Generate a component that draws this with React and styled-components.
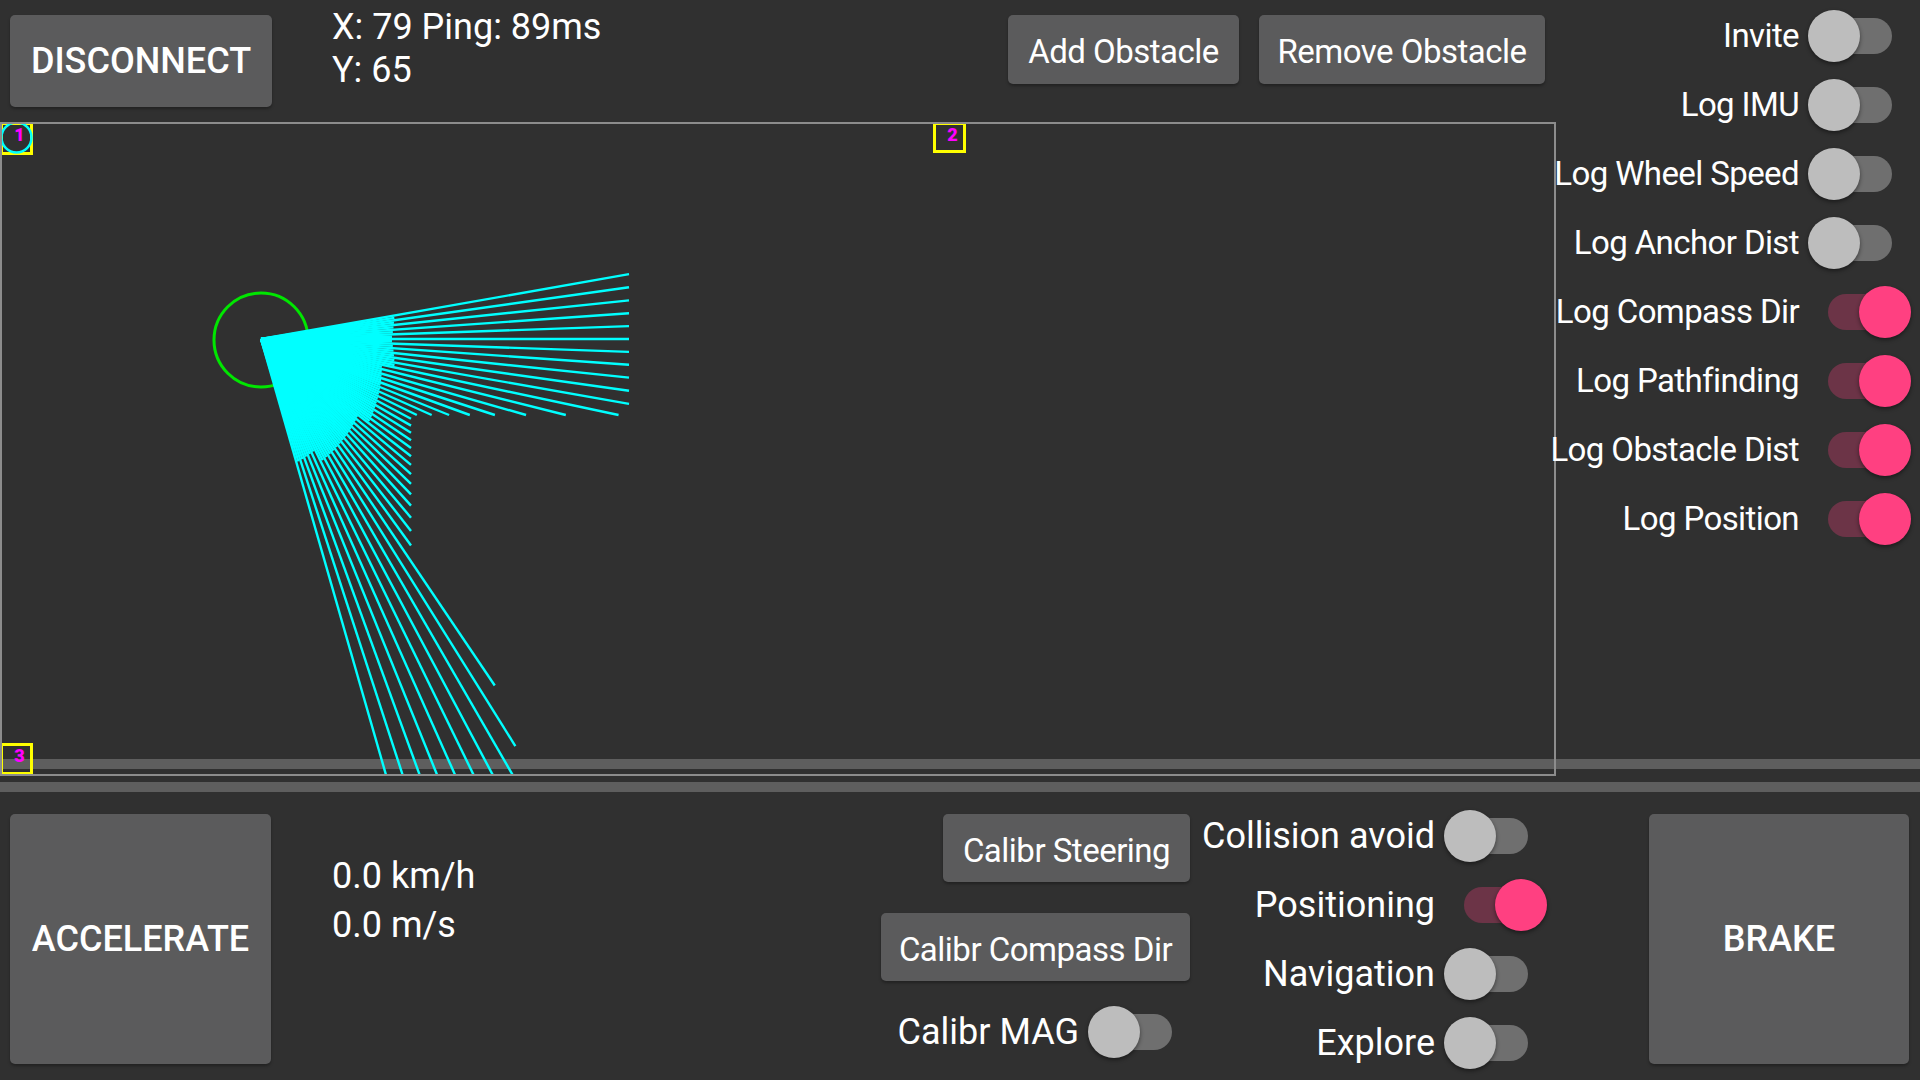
import styled, { createGlobalStyle } from "styled-components";

const GlobalStyle = createGlobalStyle`
  html, body {
    margin: 0;
    background: #303030;
  }
  body {
    font-family: Roboto, "Liberation Sans", sans-serif;
    color: #ffffff;
  }
`;

const Screen = styled.div`
  width: 1920px;
  height: 1080px;
  display: flex;
  flex-direction: column;
  background: #303030;
  overflow: hidden;
`;

const TopSection = styled.div`
  position: relative;
  display: grid;
  grid-template-columns: 1556px minmax(0, 1fr);
`;

const LeftColumn = styled.div`
  display: flex;
  flex-direction: column;
`;

const Header = styled.div`
  height: 122px;
  box-sizing: border-box;
  display: flex;
  align-items: flex-start;
  padding: 15px 11px 0 10px;
`;

const Button = styled.button`
  flex-shrink: 0;
  width: ${({ $w }) => $w}px;
  height: ${({ $h }) => $h}px;
  margin-left: ${({ $ml }) => ($ml === "auto" ? "auto" : `${$ml || 0}px`)};
  padding: ${({ $caps }) => ($caps ? "0" : "4px 0 0")};
  border: none;
  border-radius: 5px;
  background: #5b5b5c;
  box-shadow: 0 2px 3px rgba(0, 0, 0, 0.3);
  color: #ffffff;
  font-family: Roboto, "Liberation Sans", sans-serif;
  font-size: ${({ $caps }) => ($caps ? "36px" : "33px")};
  font-weight: ${({ $caps }) => ($caps ? 500 : 400)};
  letter-spacing: ${({ $caps }) => ($caps ? "0" : "-0.5px")};
  text-transform: ${({ $caps }) => ($caps ? "uppercase" : "none")};
  white-space: nowrap;
`;

const Readout = styled.div`
  margin-left: ${({ $ml }) => $ml}px;
  margin-top: ${({ $mt }) => $mt}px;
  font-size: 36px;
  line-height: ${({ $lh }) => $lh}px;
  white-space: nowrap;
`;

const Canvas = styled.svg`
  position: relative;
  z-index: 1;
  display: block;
  width: 1556px;
  height: 654px;
  box-sizing: border-box;
  border: 2px solid #8c8c8c;
`;

const Band = styled.div`
  height: 10px;
  background: #5e5e5e;
`;

const OverBand = styled(Band)`
  position: absolute;
  left: 0;
  right: 0;
  bottom: 7px;
  z-index: 0;
`;

const LowerBand = styled(Band)`
  margin-top: 6px;
`;

const RightPanel = styled.div`
  position: relative;
  z-index: 2;
  min-width: 0;
  display: flex;
  flex-direction: column;
  padding: 1px 9px 0 0;
`;

const ToggleRow = styled.div`
  height: 69px;
  display: flex;
  align-items: center;
  justify-content: flex-end;
  gap: 9px;
`;

const Label = styled.span`
  flex-shrink: 0;
  font-size: ${({ $big }) => ($big ? "36px" : "33px")};
  letter-spacing: ${({ $big }) => ($big ? "0" : "-0.6px")};
  white-space: nowrap;
`;

const SwitchBox = styled.span`
  position: relative;
  flex-shrink: 0;
  width: 103px;
  height: 52px;
`;

const Track = styled.span`
  position: absolute;
  left: 20px;
  top: 8px;
  width: 64px;
  height: 36px;
  border-radius: 18px;
  background: ${({ $on }) => ($on ? "#6c3447" : "#6f6f6f")};
`;

const Thumb = styled.span`
  position: absolute;
  top: 0;
  left: ${({ $on }) => ($on ? "51px" : "0")};
  width: 52px;
  height: 52px;
  border-radius: 50%;
  background: ${({ $on }) => ($on ? "#ff4081" : "#bdbdbd")};
  box-shadow: 0 2px 4px rgba(0, 0, 0, 0.45);
`;

const BottomRow = styled.div`
  display: flex;
  align-items: flex-start;
  padding: 22px 11px 0 10px;
`;

const CalibColumn = styled.div`
  margin-left: auto;
  display: flex;
  flex-direction: column;
  align-items: flex-end;
  gap: 31px;
`;

const CalibButton = styled(Button)`
  margin-right: 1px;
`;

const MagRow = styled(ToggleRow)`
  height: 52px;
  margin-top: -6px;
`;

const ModeColumn = styled.div`
  width: 356px;
  margin-top: -13px;
  display: flex;
  flex-direction: column;
`;

function Switch({ on }) {
  return (
    <SwitchBox>
      <Track $on={on} />
      <Thumb $on={on} />
    </SwitchBox>
  );
}

function Toggle({ label, on, big }) {
  return (
    <ToggleRow>
      <Label $big={big}>{label}</Label>
      <Switch on={on} />
    </ToggleRow>
  );
}

const logToggles = [
  ["Invite", false],
  ["Log IMU", false],
  ["Log Wheel Speed", false],
  ["Log Anchor Dist", false],
  ["Log Compass Dir", true],
  ["Log Pathfinding", true],
  ["Log Obstacle Dist", true],
  ["Log Position", true],
];

const modeToggles = [
  ["Collision avoid", false],
  ["Positioning", true],
  ["Navigation", false],
  ["Explore", false],
];

// lidar style ray lengths, in px from the car centre
function rayLength(deg) {
  const t = (deg * Math.PI) / 180;
  if (deg % 2 !== 0) return 124 + ((Math.abs(deg) * 7) % 13);
  if (deg <= 11) return 368 / Math.cos(t);
  if (deg <= 26) return 76 / Math.sin(t);
  if (deg <= 54) return 150 / Math.cos(t);
  if (deg === 56) return 418;
  if (deg === 58) return 480;
  return 700;
}

const origin = { x: 261, y: 339 };
const rays = [];
for (let d = -10; d <= 74; d++) {
  const len = rayLength(d);
  const t = (d * Math.PI) / 180;
  rays.push({
    d,
    x2: origin.x + len * Math.cos(t),
    y2: origin.y + len * Math.sin(t),
  });
}

function Marker({ x, y, w, h, label, ring }) {
  return (
    <g>
      <rect x={x} y={y} width={w} height={h} fill="none" stroke="#ffff00" strokeWidth="3" />
      {ring && (
        <circle cx={x + w / 2} cy={y + h / 2 - 1} r="15" fill="none" stroke="#00ffff" strokeWidth="2.5" />
      )}
      <text
        x={x + w / 2 + 3}
        y={y + 17}
        fill="#ff00ff"
        fontFamily="Roboto, sans-serif"
        fontWeight="900"
        fontSize="18"
        textAnchor="middle"
      >
        {label}
      </text>
    </g>
  );
}

function Map() {
  return (
    <Canvas viewBox="2 124 1552 650" width="1552" height="650">
      <circle cx={261} cy={340} r="47" fill="none" stroke="#00e600" strokeWidth="3" />
      {rays.map((r) => (
        <line
          key={r.d}
          x1={origin.x}
          y1={origin.y}
          x2={r.x2}
          y2={r.y2}
          stroke="#00ffff"
          strokeWidth="2.4"
        />
      ))}
      <Marker x={1.5} y={123.5} w={30} h={30} label="1" ring />
      <Marker x={934.5} y={123.5} w={30} h={28} label="2" />
      <Marker x={1.5} y={744.5} w={30} h={29} label="3" />
    </Canvas>
  );
}

export default function App() {
  return (
    <>
      <GlobalStyle />
      <Screen>
        <TopSection>
          <LeftColumn>
            <Header>
              <Button $caps $w={262} $h={92}>
                Disconnect
              </Button>
              <Readout $ml={60} $mt={-9} $lh={43}>
                X: 79 Ping: 89ms
                <br />
                Y: 65
              </Readout>
              <Button $w={231} $h={69} $ml="auto">
                Add Obstacle
              </Button>
              <Button $w={286} $h={69} $ml={20}>
                Remove Obstacle
              </Button>
            </Header>
            <Map />
          </LeftColumn>
          <RightPanel>
            {logToggles.map(([label, on]) => (
              <Toggle key={label} label={label} on={on} />
            ))}
          </RightPanel>
          <OverBand />
        </TopSection>
        <LowerBand />
        <BottomRow>
          <Button $caps $w={261} $h={250}>
            Accelerate
          </Button>
          <Readout $ml={61} $mt={38} $lh={49}>
            0.0 km/h
            <br />
            0.0 m/s
          </Readout>
          <CalibColumn>
            <CalibButton $w={247} $h={68}>
              Calibr Steering
            </CalibButton>
            <CalibButton $w={309} $h={68}>
              Calibr Compass Dir
            </CalibButton>
            <MagRow>
              <Label $big>Calibr MAG</Label>
              <Switch on={false} />
            </MagRow>
          </CalibColumn>
          <ModeColumn>
            {modeToggles.map(([label, on]) => (
              <Toggle key={label} label={label} on={on} big />
            ))}
          </ModeColumn>
          <Button $caps $w={260} $h={250} $ml={102}>
            Brake
          </Button>
        </BottomRow>
      </Screen>
    </>
  );
}
